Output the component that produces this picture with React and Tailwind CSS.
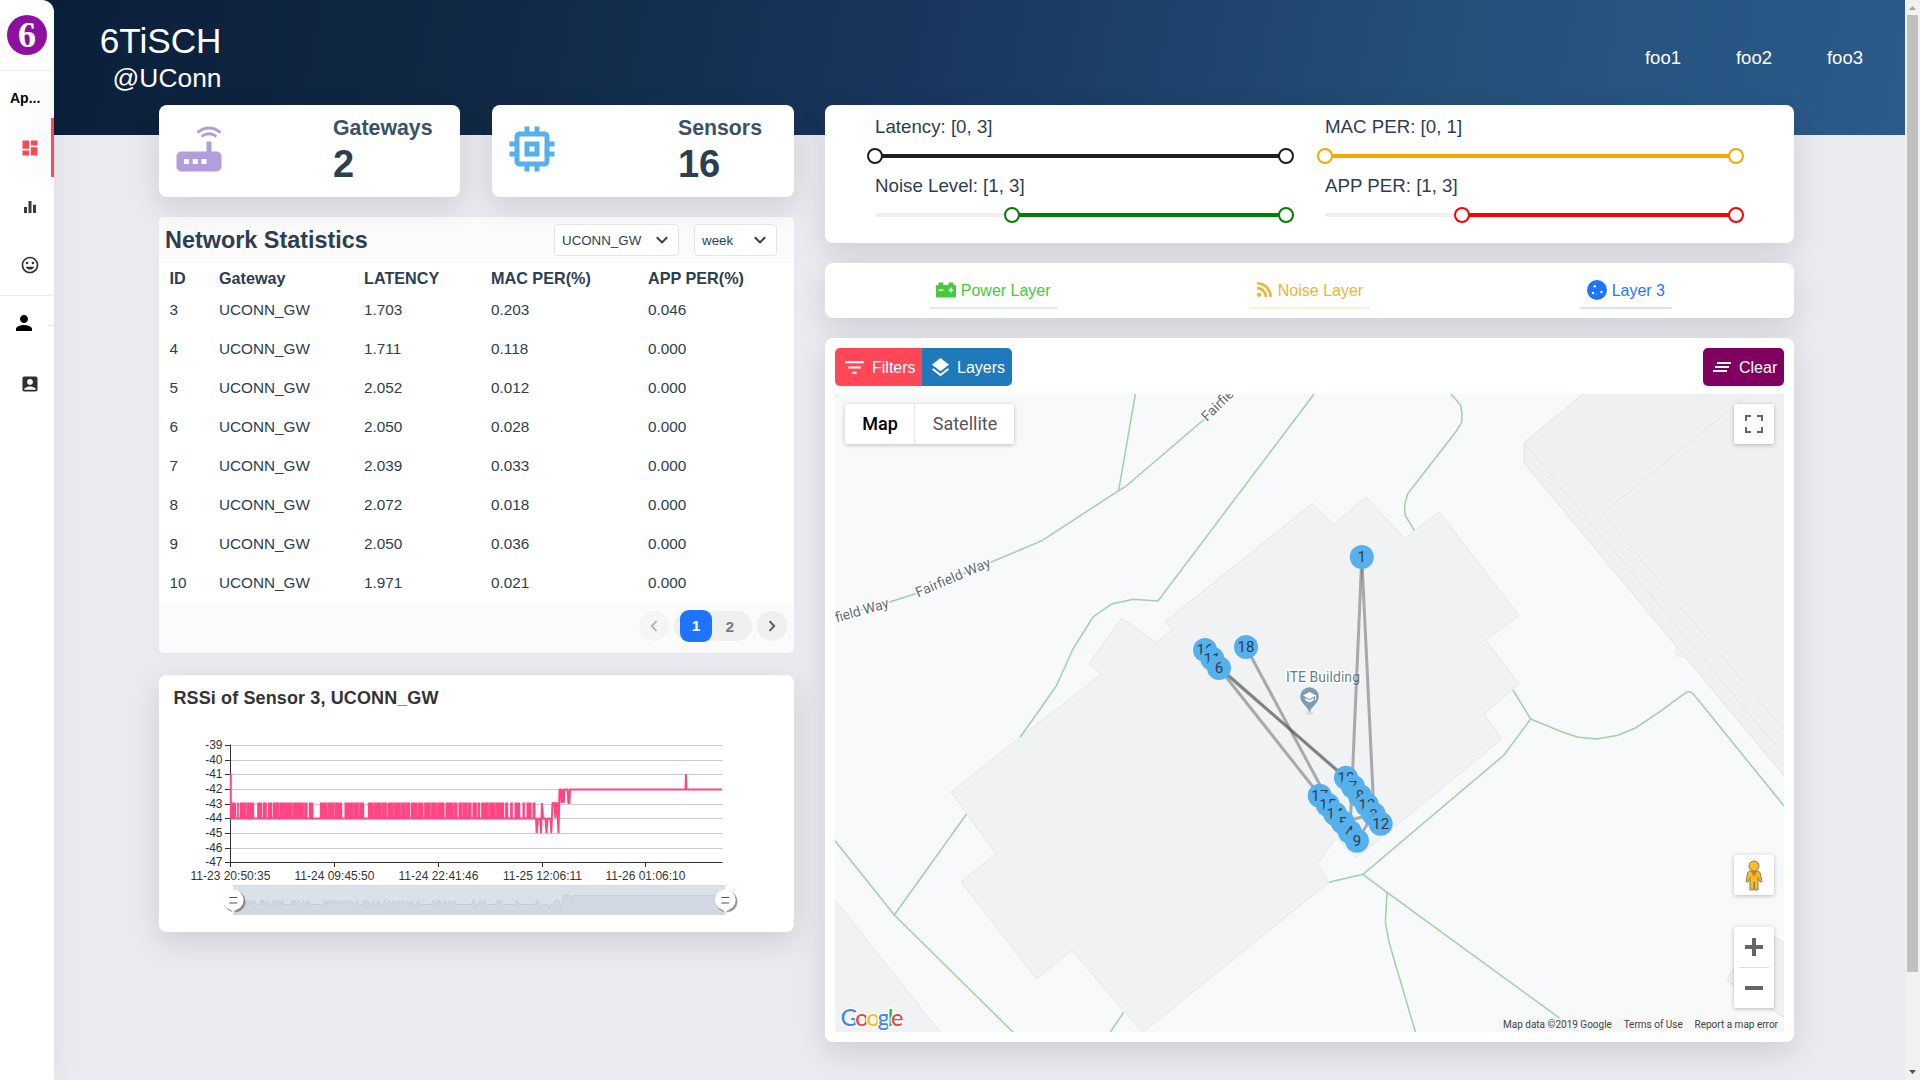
import React from "react";
import { MdDashboard, MdPerson, MdAccountBox, MdFilterList, MdLayers, MdClearAll, MdMemory, MdRouter, MdTagFaces, MdEqualizer } from "react-icons/md";
import { FaCarBattery, FaRss } from "react-icons/fa";

const CARD = "rounded-lg bg-white shadow-[0_10px_30px_0_rgba(0,0,0,0.12)]";

function Sidebar() {
  return (
    <aside className="relative z-10 flex h-full w-[54px] shrink-0 flex-col overflow-hidden rounded-tr-[12px] bg-white shadow-[0_0_30px_rgba(0,0,0,0.06)]">
      <div className="flex h-[71px] items-start border-b border-[#ececec] pl-[7px] pt-[15px]">
        <div className="flex h-10 w-10 items-center justify-center rounded-full bg-[#8e10a0] font-['Liberation_Serif',serif] text-[36px] font-bold leading-[40px] text-white">6</div>
      </div>
      <div className="mt-[10px] flex h-[37px] items-center bg-gradient-to-r from-white to-[#fafafa] pb-1 pl-[10px] text-[14px] font-bold leading-none text-black">Ap...</div>
      <div className="flex h-[59px] items-center justify-end border-r-[3px] border-[#ff4757] bg-gradient-to-r from-white to-[#fafafa] pr-[11.5px]">
        <MdDashboard size={20} color="#ff4757" />
      </div>
      <div className="flex h-[59px] items-center justify-end pr-[15px]"><MdEqualizer size={18} color="#3a3a3a" /></div>
      <div className="flex h-[59px] items-center justify-end pb-px pr-[14.5px]"><MdTagFaces size={20} color="#303030" /></div>
      <div className="flex h-[60px] items-center border-t border-[#ececec] pl-[12px]">
        <MdPerson size={24} color="#000" className="-mt-[5px]" />
        <div className="ml-auto h-px w-[6px] bg-[#e5e5e5]" />
      </div>
      <div className="flex h-[59px] items-center justify-end pb-px pr-[14.5px]"><MdAccountBox size={20} color="#303030" /></div>
    </aside>
  );
}

function StatCard({ icon, label, value, pad }) {
  return (
    <div className={`${CARD} flex h-[92px] justify-between pl-[9.5px] ${pad}`}>
      <div className="pt-[13.5px]">{icon}</div>
      <div>
        <div className="mt-[9px] text-[21.3px] font-bold leading-[28px] text-[#3b5166]">{label}</div>
        <div className="text-[38px] font-bold leading-[44px] text-[#2c3e50]">{value}</div>
      </div>
    </div>
  );
}

function Select({ children, width }) {
  return (
    <div className={`flex h-8 items-center justify-between rounded border border-[#e4e4e4] bg-white pl-[7px] pr-[9px] text-[13.33px] leading-none ${width}`}>
      <span className="pt-px">{children}</span>
      <svg width="14" height="10" viewBox="0 0 14 10" fill="none" stroke="#2c3e50" strokeWidth="2"><path d="M1.8 2.2 7 7.4 12.2 2.2" /></svg>
    </div>
  );
}

const rows = [
  ["3", "1.703", "0.203", "0.046"],
  ["4", "1.711", "0.118", "0.000"],
  ["5", "2.052", "0.012", "0.000"],
  ["6", "2.050", "0.028", "0.000"],
  ["7", "2.039", "0.033", "0.000"],
  ["8", "2.072", "0.018", "0.000"],
  ["9", "2.050", "0.036", "0.000"],
  ["10", "1.971", "0.021", "0.000"],
];

const GRID = "grid grid-cols-[49.5px_145px_127px_157px_1fr] pl-[10.5px]";

function Stats() {
  return (
    <section className="mt-5 h-[436px] overflow-hidden rounded-[5px] bg-white text-[#2c3e50] shadow-[0_0_10px_rgba(0,0,0,0.02)]">
      <div className="flex h-[46px] items-center bg-[#fbfbfb] pl-[6px] pr-[17px]">
        <h3 className="mr-auto pt-[2px] text-[23.4px] font-bold leading-none">Network Statistics</h3>
        <Select width="w-[125px]">UCONN_GW</Select>
        <div className="w-[15px]" />
        <Select width="w-[83px]">week</Select>
      </div>
      <div className={`${GRID} h-7 items-center pt-[3px] text-[16.2px] font-bold leading-none`}>
        <span>ID</span><span>Gateway</span><span>LATENCY</span><span>MAC PER(%)</span><span>APP PER(%)</span>
      </div>
      {rows.map((r) => (
        <div key={r[0]} className={`${GRID} h-[39px] items-center pb-px text-[15.3px] leading-none`}>
          <span>{r[0]}</span><span>UCONN_GW</span><span>{r[1]}</span><span>{r[2]}</span><span>{r[3]}</span>
        </div>
      ))}
      <div className="flex h-[50px] items-start justify-end bg-[#fbfbfb] pr-[7px] pt-2 text-[15.5px] font-bold text-[#7b7b7b]">
        <div className="flex h-[30px] w-[30px] items-center justify-center rounded-full bg-[#f5f5f5]">
          <svg width="8" height="12" viewBox="0 0 8 12" fill="none" stroke="#b0b0b0" strokeWidth="1.8"><path d="M6.5 1.2 1.8 6l4.7 4.8" /></svg>
        </div>
        <div className="ml-[5px] flex h-[30px] w-[78px] items-center rounded-full bg-[#efefef] pl-[6px]">
          <span className="flex h-8 w-8 shrink-0 items-center justify-center rounded-[9px] bg-[#1f74ff] text-white">1</span>
          <span className="ml-[13.5px] pt-px">2</span>
        </div>
        <div className="ml-[5px] flex h-[30px] w-[30px] items-center justify-center rounded-full bg-[#efefef]">
          <svg width="8" height="12" viewBox="0 0 8 12" fill="none" stroke="#555" strokeWidth="1.8"><path d="M1.5 1.2 6.2 6l-4.7 4.8" /></svg>
        </div>
      </div>
    </section>
  );
}

const bursts = [[62, 78], [82, 86], [90, 132], [142, 156], [159, 170], [174, 186], [189, 292], [297, 310], [330, 396], [404, 462], [474, 530], [533, 600], [603, 640], [643, 703], [707, 742], [746, 784], [788, 800], [803, 810], [814, 882], [886, 894], [901, 908], [914, 930], [938, 944], [950, 964], [968, 976]];
const slits = [108, 207, 246, 281, 352, 372, 430, 446, 490, 514, 550, 572, 586, 622, 661, 680, 730, 756, 772, 836, 856];
const ripples = [104, 113, 122, 133, 153, 159, 172, 190, 198, 207, 217, 247, 254, 265, 280, 294, 345, 356, 368, 378, 391, 402, 413, 425, 441, 462, 472, 490, 505, 524, 537, 551, 565, 577, 590, 604, 625, 670, 682, 688, 704, 719, 733, 790, 811, 824, 862, 872, 922];

function Chart() {
  const X = (p) => 210 + p / 3;
  const levels = [-39, -40, -41, -42, -43, -44, -45, -46, -47];
  const ticks = [[230.5, "11-23 20:50:35"], [334.5, "11-24 09:45:50"], [438.5, "11-24 22:41:46"], [542.5, "11-25 12:06:11"], [645.5, "11-26 01:06:10"]];
  const mini = "M234 904.5" + ripples.map((p) => `H${X(p) - 2}L${X(p)} 900L${X(p) + 2} 904.5`).join("") + "H535L537 900H538L540 909L542 904.5H548L549 909L551 904.5H553L555 900H559L561 909L564 895H569L571 899L573 895.5H725";
  return (
    <section className={`${CARD} mt-[22px] h-[257px]`}>
      <svg width="635" height="257" viewBox="159 675 635 257" fontFamily="Liberation Sans, Arial, sans-serif">
        <text x="173.5" y="704" fontSize="18" fontWeight="bold" fill="#333" textLength="265">RSSi of Sensor 3, UCONN_GW</text>
        {levels.map((v, i) => {
          const y = Math.round(745 + i * 14.66) + 0.5;
          return (
            <g key={v}>
              {i < 8 && <path d={`M231 ${y}H722.5`} stroke="#ccc" />}
              <path d={`M225 ${y}h5`} stroke="#333" />
              <text x="222.5" y={y + 3.5} fontSize="12" textAnchor="end" fill="#333">{v}</text>
            </g>
          );
        })}
        <path d="M230.5 744.5V862.5H722.5" fill="none" stroke="#333" />
        {ticks.map(([x, t]) => (
          <g key={t}>
            <path d={`M${x} 862v5`} stroke="#333" />
            <text x={x} y="879.5" fontSize="12" textAnchor="middle" fill="#333">{t}</text>
          </g>
        ))}
        <g fill="#ff4683">
          {bursts.map(([a, b]) => <rect key={a} x={X(a) - 0.2} y="802.5" width={(b - a) / 3 + 0.4} height="16" />)}
        </g>
        <g fill="#ffa3c1" opacity="0.6">
          {slits.map((a) => <rect key={a} x={X(a)} y="803" width="0.8" height="13" />)}
        </g>
        <path d="M230.8 774V818.5H536L536.7 833L538 818.5H540L541 833L542 803L543 818.5H545.5L546.5 833L547.5 818.5H550.5L551.3 833L552.5 803H554.5L555.3 818L556 803H557L558.5 833L559.5 789.5H561L561.5 803L562.8 789.5H563.2L563.8 803L564.5 789.5H567.8L568.3 803L569.5 803L570 789.5H685.5L686 774L686.5 789.5H722" fill="none" stroke="#ff4683" strokeWidth="2" strokeLinejoin="bevel" />
        <rect x="233" y="885" width="492.5" height="30" fill="#dbe1eb" />
        <path d={mini + "V914H234Z"} fill="#d1d8e2" />
        <path d={mini} fill="none" stroke="#c3cad5" strokeWidth="0.8" />
        <path d="M233 885.5H725.5M233 914.5H725.5" stroke="#d9d9d9" />
        {[233.3, 725.3].map((x) => (
          <g key={x}>
            <circle cx={x + 2} cy="902" r="10.5" fill="#000" opacity="0.18" />
            <circle cx={x + 1} cy="901.2" r="10.8" fill="#555" opacity="0.5" />
            <path d={`M${x - 3} 909L${x} 913L${x + 3} 909Z`} fill="#fff" />
            <circle cx={x} cy="900" r="10.4" fill="#fff" />
            <path d={`M${x - 4} 897.5h8M${x - 4} 903h8`} stroke="#555" strokeWidth="1.2" />
          </g>
        ))}
      </svg>
    </section>
  );
}

function Range({ label, from, color, ring }) {
  return (
    <div className="w-[411px]">
      <div className="h-[35px] text-[18.72px] leading-[28px] text-[#2c3e50]">{label}</div>
      <div className="flex h-4 items-center">
        <div className={`h-1 rounded-l bg-[#efefef] ${from ? "w-[137px]" : "w-0"}`} />
        <div className={`-mx-2 h-4 w-4 shrink-0 rounded-full border-2 bg-white ${ring} z-10`} />
        <div className={`h-1 flex-1 ${color}`} />
        <div className={`-mx-2 h-4 w-4 shrink-0 rounded-full border-2 bg-white ${ring} z-10`} />
      </div>
    </div>
  );
}

const nodes = [
  [1205, 650, 16], [1212.3, 658.7, 11], [1219, 668, 6], [1246, 647, 18], [1361.8, 557, 1],
  [1346, 777.7, 10], [1353, 786.7, 7], [1360, 796, 8], [1367, 805, 13], [1373.7, 814.3, 3], [1380.7, 823.7, 12],
  [1319.7, 795.7, 17], [1327.7, 804.7, 15], [1335, 813.7, 14], [1342.7, 822.3, 5], [1349.7, 831.7, 4], [1357, 840.7, 9],
];

function MapCanvas() {
  return (
    <svg width="949" height="638" viewBox="835 394 949 638" className="block" fontFamily="Roboto, sans-serif">
      <rect x="835" y="394" width="949" height="638" fill="#f8f9fb" />
      <path d="M835 394h6l-6 5z" fill="#f0f0f0" />
      <g fill="#f1f2f4" stroke="#e6e7e9">
        <path d="M1312.5 503.3 1333.2 524.7 1365.7 497 1404.6 538.3 1439.3 512 1519 615.7 1485.7 640.3 1519 683.7 1484 714.3 1502 739.3 1430 798 1356.7 857.7 1336 838.3 1317.9 863.3 1329 882.3 1142.5 1032.7 1071.8 950 1036.4 979 961.4 882.3 995.7 853.7 951 792 1020 737.3 1101.4 674.3 1089 664 1121.8 618 1156 642.7 1172 630 1165.4 621.3Z" />
        <path d="M834 898.3 940.7 1033H834Z" />
      </g>
      <path d="M1336 839.5 1356 858.5 1330 883 1318.5 863.3Z" fill="#f8f9fb" />
      <g fill="#f0f0f0" stroke="#e2e2e2">
        <path d="M1584.3 393 1524.3 442.7V463.3L1785 777V393Z" />
        <path d="M1524.3 442.7 1754 720 1785 757M1750 393 1602.9 513.3 1775.4 720 1785 731" fill="none" strokeWidth="0.8" />
        <path d="M1774 936 1785 943.5V1018L1728 981.7V977L1736 966Z" />
      </g>
      <path d="M1675 647l9 10h-9z" fill="#f0f0f0" />
      <g fill="none" stroke="#9dd2a6" strokeWidth="1.5">
        <path d="M1135.4 394 1118.6 490.7M835 617 889.6 602 914.6 594 989.6 562.7 1042 540.7 1118.6 490.7 1125 487 1201.4 421.7 1235 393" />
        <path d="M1314 394 1158 601 1133 599.3 1111.8 604 1093 617 1073 649 1056.4 685.7 1032.5 720 1020 737.3" />
        <path d="M966.4 814.3 894.3 915M835 840.7 894.3 915 1012.9 1032M1123.6 1012.3 1110.4 1032" />
        <path d="M1329 882.3 1363 874.3 1504 755 1530.7 719 1512.9 690M1530.7 719 1562.9 732.3 1578.2 737.3 1597 739 1617.9 735.3 1635.4 728 1660 711.7 1683 694.7Q1689 689 1694 694.7L1784 806" />
        <path d="M1363 874.3 1387 892.3 1578.6 1032M1387 892.3 1385.4 922.7 1389.3 943.3 1415.4 1032" />
        <path d="M1451 394 1460.7 405.3 1462 413.3 1461.8 422 1456.4 431 1407.5 494 1404.6 505 1405 515 1414.3 530.3" />
      </g>
      <g fontSize="14" fill="#5f6b72" stroke="#fff" strokeWidth="3" strokeLinejoin="round" paintOrder="stroke">
        <text transform="translate(918 597.5) rotate(-23)" textLength="80">Fairfield Way</text>
        <text transform="translate(836.5 622.5) rotate(-16)" textLength="55">field Way</text>
        <text transform="translate(1207 422) rotate(-44.5)">Fairfie</text>
        <text x="1286" y="682" textLength="74" fill="#667f8c">ITE Building</text>
      </g>
      <ellipse cx="1309.5" cy="713" rx="3.5" ry="2" fill="#dedfe0" />
      <path d="M1309.5 713c-.8-6-9.3-9.5-9.3-16.5a9.3 9.3 0 0 1 18.6 0c0 7-8.5 10.5-9.3 16.5Z" fill="#7b9eb0" />
      <path d="M1303 695.5 1309.5 692l6.5 3.5v4.5h-1v-4l-5.5 3ZM1305.3 698l4.2 2.3 4.2-2.3v2.3l-4.2 2.2-4.2-2.2Z" fill="#fff" />
      <g fill="none" stroke="#505050" strokeOpacity="0.45" strokeWidth="3">
        <path d="M1361.8 557 1350 831.7" />
        <path d="M1361.8 557 1374 814" />
        <path d="M1246 647 1335 813" />
        <path d="M1219 668 1346 777.7" />
        <path d="M1212.3 661 1346 778.5" />
        <path d="M1219 668 1321 797" />
        <path d="M1342.7 822 1373.7 814M1357 840.7 1373.7 814" />
      </g>
      {nodes.map(([x, y, n]) => (
        <g key={n}>
          <circle cx={x} cy={y} r="12" fill="#56b0ec" />
          <text x={x} y={y + 5.3} fontSize="15" textAnchor="middle" fill="#2c3e50">{n}</text>
        </g>
      ))}
      <g fontSize="23.5" fontFamily="Lato, sans-serif" fontWeight="500" stroke="#fff" strokeWidth="3" paintOrder="stroke">
        <text x="840.5" y="1025.5" textLength="63" fill="#4285f4">G<tspan fill="#ea4335">o</tspan><tspan fill="#fbbc05">o</tspan><tspan>g</tspan><tspan fill="#34a853">l</tspan><tspan fill="#ea4335">e</tspan></text>
      </g>
    </svg>
  );
}

const CTRL = "absolute rounded-[2px] bg-white shadow-[0_1px_4px_rgba(0,0,0,0.25)]";

function MapView() {
  return (
    <div className="relative mt-2 h-[638px] w-[949px] overflow-hidden font-['Roboto']">
      <MapCanvas />
      <div className={`${CTRL} left-[10px] top-[10px] flex h-10 w-[169px] items-center text-[18px] leading-none text-[#565656]`}>
        <span className="flex h-full w-[70px] items-center justify-center border-r border-[#e8e8e8] pl-px font-medium text-black">Map</span>
        <span className="flex-1 pl-px text-center">Satellite</span>
      </div>
      <div className={`${CTRL} right-[10px] top-[10px] flex h-10 w-10 items-center justify-center`}>
        <svg width="18" height="18" viewBox="0 0 18 18" fill="none" stroke="#666" strokeWidth="2"><path d="M1 6V1h5M12 1h5v5M17 12v5h-5M6 17H1v-5" /></svg>
      </div>
      <div className={`${CTRL} right-[10px] top-[461px] flex h-10 w-10 items-center justify-center`}>
        <svg width="18" height="31" viewBox="0 0 18 31" fill="#fbbc1f" stroke="#8a7c60" strokeWidth="1">
          <path d="M4.5 11h8.500l2 1.500 2 9-2 .5-2-4.500v12.500H9.800l-.6-8-.6 8H5V17.500L3 22l-2-.5 1.800-9Z" />
          <path d="M5.500 11h7L9 17Z" fill="#e27a2b" stroke="none" />
          <circle cx="9" cy="6" r="5" />
        </svg>
      </div>
      <div className={`${CTRL} right-[10px] top-[533px] flex h-[81px] w-10 flex-col items-center`}>
        <svg width="18" height="40" viewBox="0 0 18 40" stroke="#666" strokeWidth="4"><path d="M0 20h18M9 11v18" /></svg>
        <div className="h-px w-[30px] bg-[#e0e0e0]" />
        <svg width="18" height="40" viewBox="0 0 18 40" stroke="#666" strokeWidth="4"><path d="M0 20h18" /></svg>
      </div>
      <div className="absolute bottom-0 right-0 flex h-[14px] w-[286px] items-center justify-between bg-[#f5f5f5]/80 pl-[5px] pr-[6px] text-[10px] leading-none text-[#444]">
        <span>Map data ©2019 Google</span><span>Terms of Use</span><span>Report a map error</span>
      </div>
    </div>
  );
}

function Layers() {
  return (
    <section className={`${CARD} mt-5 grid h-[55px] grid-cols-3 justify-items-center px-[10px] pt-[9px] text-[16px] leading-none`}>
      <div className="flex h-[37px] items-center gap-[5px] border-b-2 border-[#d6f3d6] px-[6px] text-[#46c93a]"><FaCarBattery size={20} /><span className="pt-[2px]">Power Layer</span></div>
      <div className="flex h-[37px] items-center gap-[5px] border-b-2 border-[#fbf0d4] px-[6.5px] text-[#e8b635]"><FaRss size={17} /><span className="pt-[2px]">Noise Layer</span></div>
      <div className="flex h-[37px] items-center gap-[5px] border-b-2 border-[#d2e3ff] px-[6.5px] text-[#1f74ff]">
        <svg width="20" height="20" viewBox="0 0 20 20"><circle cx="10" cy="10" r="10" fill="#1f74ff" /><g fill="#fff"><circle cx="7.8" cy="6.3" r="1.2" /><circle cx="6" cy="13" r="1.2" /><circle cx="14.5" cy="12" r="1.2" /><circle cx="9.8" cy="14" r=".5" /></g></svg>
        <span className="pt-[2px]">Layer 3</span>
      </div>
    </section>
  );
}

export default function App() {
  return (
    <div className="flex h-[1080px] w-[1920px] overflow-hidden bg-[#eaebf0] font-['Liberation_Sans',Arial,sans-serif]">
      <div className="flex h-full w-[54px] shrink-0 bg-[#0a1f3a]"><Sidebar /></div>
      <main className="w-[1851px] shrink-0">
        <header className="flex h-[135px] items-start bg-[linear-gradient(100deg,#0a1f3a_0%,#112946_24%,#19375f_48%,#24507a_76%,#2b5a8b_100%)] text-white">
          <div className="w-[167.5px] pt-[20px] text-right">
            <div className="text-[35.2px] leading-[41px]">6TiSCH</div>
            <div className="text-[26.4px] leading-[34px]">@UConn</div>
          </div>
          <nav className="ml-auto flex gap-[55px] pr-[42px] pt-[46px] text-[18.5px] leading-[24px]">
            <span>foo1</span><span>foo2</span><span>foo3</span>
          </nav>
        </header>
        <div className="relative -mt-[30px] flex gap-[31px] pl-[105px]">
          <div className="w-[635px]">
            <div className="grid grid-cols-[301px_302px] gap-8">
              <StatCard pad="pr-[27.5px]" label="Gateways" value="2" icon={<MdRouter size={60} color="#b39ddb" />} />
              <StatCard pad="pr-[32px]" label="Sensors" value="16" icon={<MdMemory size={60} color="#56b0ec" />} />
            </div>
            <Stats />
            <Chart />
          </div>
          <div className="w-[969px]">
            <section className={`${CARD} grid h-[138px] grid-cols-[450px_411px] content-start gap-y-[8px] pl-[50px] pt-[8px]`}>
              <Range label="Latency: [0, 3]" color="bg-[#1e1e1e]" ring="border-[#1e1e1e]" />
              <Range label="MAC PER: [0, 1]" color="bg-[#ffa500]" ring="border-[#ffa500]" />
              <Range from label="Noise Level: [1, 3]" color="bg-[#008000]" ring="border-[#008000]" />
              <Range from label="APP PER: [1, 3]" color="bg-[#ff0000]" ring="border-[#ff0000]" />
            </section>
            <Layers />
            <section className={`${CARD} mt-5 h-[704px] px-[10px] pt-[10px]`}>
              <div className="flex h-[38px] text-[16px] leading-none text-white">
                <div className="flex w-[87px] items-center rounded-l-[5px] bg-[#ff4757] pl-[7px]"><MdFilterList size={25} /><span className="ml-[5px] pt-px">Filters</span></div>
                <div className="flex w-[90px] items-center rounded-r-[5px] bg-[#1f7abc] pl-[7px]"><MdLayers size={23} /><span className="ml-[5px] pt-px">Layers</span></div>
                <div className="ml-auto flex w-[81px] items-center rounded-[5px] bg-[#800060] pl-[7px]"><MdClearAll size={24} /><span className="ml-[5px] pt-px">Clear</span></div>
              </div>
              <MapView />
            </section>
          </div>
        </div>
      </main>
      <div className="flex h-full w-[15px] shrink-0 flex-col items-center bg-[#f1f1f1]">
        <svg width="15" height="15" viewBox="0 0 15 15"><path d="M4 10h7L7.5 6Z" fill="#a3a3a3" /></svg>
        <div className="h-[957px] w-[11px] bg-[#c1c1c1]" />
        <svg width="15" height="15" viewBox="0 0 15 15" className="mt-auto"><path d="M4 5h7L7.5 9Z" fill="#505050" /></svg>
      </div>
    </div>
  );
}
